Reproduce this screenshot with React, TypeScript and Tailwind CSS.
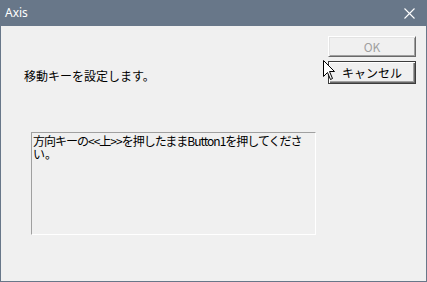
import React from 'react';

const jp = { fontFamily: '"Noto Sans CJK JP", "Noto Sans", sans-serif' };

function Cursor() {
  return (
    <svg
      className="absolute left-[322px] top-[34px] pointer-events-none"
      width="13"
      height="21"
      viewBox="0 0 13 21"
    >
      <path
        d="M0.5 0.5 L0.5 16.5 L4.5 12.5 L7.5 19.5 L9.5 18.5 L6.5 11.5 L11.5 11.5 Z"
        fill="#fff"
        stroke="#000"
        strokeWidth="1"
        strokeLinejoin="miter"
      />
    </svg>
  );
}

export default function App() {
  return (
    <div className="w-[427px] h-[282px] flex flex-col bg-[#687789] px-px pb-px">
      {/* title bar */}
      <div className="h-[26px] flex items-center justify-between pl-[4px] pr-[11px] shrink-0">
        <span className="text-white text-[12px] leading-none" style={{ fontFamily: '"Noto Sans", sans-serif' }}>
          Axis
        </span>
        <svg width="11" height="11" viewBox="0 0 11 11" className="mt-[1px]">
          <path d="M0.5 0.5 L10.5 10.5 M10.5 0.5 L0.5 10.5" stroke="#fff" strokeWidth="1.1" />
        </svg>
      </div>

      {/* body */}
      <div className="relative flex-1 bg-[#f0f0f0] text-black" style={jp}>
        <div className="flex justify-between pl-[23px] pr-[10px] pt-[10px]">
          <p className="mt-[33px] text-[12px] leading-[14px]">移動キーを設定します。</p>
          <div className="flex flex-col gap-[4px]">
            <button
              disabled
              className="w-[88px] h-[21px] border border-t-white border-l-white border-r-[#696969] border-b-[#696969] shadow-[inset_1px_1px_#e3e3e3,inset_-1px_-1px_#a0a0a0] text-[12px] leading-none text-[#a0a0a0]"
            >
              OK
            </button>
            <button className="w-[88px] h-[23px] border border-[#3c3c3c] shadow-[inset_1px_1px_#fff,inset_-1px_-1px_#696969,inset_-2px_-2px_#a0a0a0] text-[12px] leading-none">
              キャンセル
            </button>
          </div>
        </div>

        <div className="ml-[30px] mt-[48px] w-[285px] h-[103px] border border-t-[#a0a0a0] border-l-[#a0a0a0] border-r-white border-b-white pl-px pt-[1px] text-[12px] leading-[13px]">
          <div className="whitespace-nowrap tracking-[-1px]">方向キーの&lt;&lt;上&gt;&gt;を押したままButton1を押してくださ</div>
          <div>い。</div>
        </div>

        <Cursor />
      </div>
    </div>
  );
}
